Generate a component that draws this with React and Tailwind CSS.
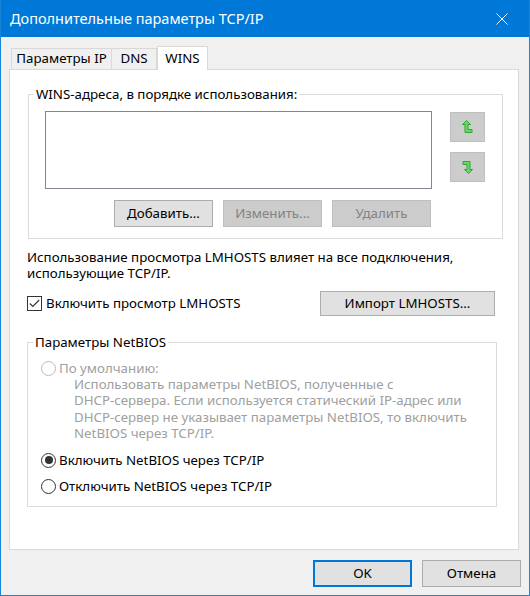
import React from 'react';

function Button({ children, disabled, primary, className = '' }) {
  const tone = disabled
    ? 'bg-[#cccccc] border border-[#bfbfbf] text-[#838383]'
    : primary
    ? 'bg-[#e1e1e1] border-2 border-[#0078d7] text-black'
    : 'bg-[#e1e1e1] border border-[#adadad] text-black';
  return (
    <div className={`flex items-center justify-center ${tone} ${className}`}>
      {children}
    </div>
  );
}

function Arrow({ down }) {
  return (
    <svg width="11" height="14" viewBox="0 0 11 14" className={down ? 'rotate-180' : ''}>
      <polygon
        points="4.5,0.5 8.5,4.5 6,4.5 6,9.5 10,9.5 10,12.5 3,12.5 3,4.5 0.5,4.5"
        fill="#6ad66a"
        stroke="#2fa82f"
        strokeWidth="1"
        strokeLinejoin="miter"
      />
    </svg>
  );
}

function Radio({ checked, disabled }) {
  return (
    <div
      className={`w-[15px] h-[15px] rounded-full border bg-white flex items-center justify-center shrink-0 ${
        disabled ? 'border-[#bcbcbc]' : 'border-[#333333]'
      }`}
    >
      {checked && <div className="w-[8px] h-[8px] rounded-full bg-[#333333]" />}
    </div>
  );
}

function Group({ title, className = '', children }) {
  return (
    <fieldset className={`border border-[#dcdcdc] ${className}`}>
      <legend className="ml-[5px] px-[2px] leading-[16px]">{title}</legend>
      {children}
    </fieldset>
  );
}

export default function App() {
  return (
    <div className="w-[530px] h-[596px] flex flex-col bg-[#f0f0f0] border-x border-b border-[#1883d7] text-[13.3px] text-black font-['Noto_Sans',sans-serif] select-none">
      {/* title bar */}
      <div className="h-[37px] shrink-0 bg-[#0078d7] flex items-center justify-between pl-[9px] pr-[21px] text-white text-[14.5px]">
        <span>Дополнительные параметры TCP/IP</span>
        <svg width="12" height="12" viewBox="0 0 12 12">
          <path d="M0.5 0.5 L11.5 11.5 M11.5 0.5 L0.5 11.5" stroke="#ffffff" strokeWidth="1" />
        </svg>
      </div>

      {/* tabs */}
      <div className="mt-[9px] ml-[10px] h-[23px] flex items-end">
        <div className="w-[100px] h-[21px] flex items-center justify-center border border-r-0 border-b-0 border-[#d9d9d9]">
          Параметры IP
        </div>
        <div className="w-[46px] h-[21px] flex items-center justify-center border border-b-0 border-[#d9d9d9]">
          DNS
        </div>
        <div className="relative z-10 w-[51px] h-[24px] -mb-px flex items-center justify-center bg-white border border-b-0 border-[#d9d9d9]">
          WINS
        </div>
      </div>

      {/* tab page */}
      <div className="ml-[8px] w-[510px] h-[481px] shrink-0 bg-white border border-[#d9d9d9] pt-[16px] pl-[17px]">
        <Group title="WINS-адреса, в порядке использования:" className="ml-[1px] w-[475px] h-[153px]">
          <div className="pl-[16px] pt-[9px]">
            <div className="flex">
              <div className="w-[387px] h-[78px] border border-[#828790] bg-white" />
              <div className="ml-[18px] mt-[1px] flex flex-col gap-[10px]">
                <Button className="w-[35px] h-[30px]" disabled>
                  <Arrow />
                </Button>
                <Button className="w-[35px] h-[30px]" disabled>
                  <Arrow down />
                </Button>
              </div>
            </div>
            <div className="w-[386px] mt-[11px] flex justify-end gap-[10px]">
              <Button className="w-[99px] h-[27px]">Добавить...</Button>
              <Button className="w-[99px] h-[27px]" disabled>Изменить...</Button>
              <Button className="w-[99px] h-[27px]" disabled>Удалить</Button>
            </div>
          </div>
        </Group>

        <p className="mt-[10px] leading-[16px]">
          Использование просмотра LMHOSTS влияет на все подключения,
          <br />
          использующие TCP/IP.
        </p>

        <div className="mt-[10px] w-[468px] h-[25px] flex items-center justify-between">
          <div className="flex items-center gap-[4px]">
            <div className="w-[15px] h-[15px] border border-[#333333] bg-white flex items-center justify-center">
              <svg width="11" height="9" viewBox="0 0 11 9">
                <path d="M0.8 4.5 L3.8 7.5 L10.2 1" fill="none" stroke="#333333" strokeWidth="1.1" />
              </svg>
            </div>
            <span>Включить просмотр LMHOSTS</span>
          </div>
          <Button className="w-[175px] h-[25px]">Импорт LMHOSTS...</Button>
        </div>

        <Group title="Параметры NetBIOS" className="mt-[18px] w-[470px] h-[173px]">
          <div className="pl-[13px] pt-[10px] leading-[16px]">
            <div className="flex items-center gap-[3px] text-[#a0a0a0]">
              <Radio disabled />
              <span>По умолчанию:</span>
            </div>
            <p className="pl-[33px] text-[#a0a0a0] leading-[16.3px] whitespace-nowrap">
              Использовать параметры NetBIOS, полученные с
              <br />
              DHCP-сервера. Если используется статический IP-адрес или
              <br />
              DHCP-сервер не указывает параметры NetBIOS, то включить
              <br />
              NetBIOS через TCP/IP.
            </p>
            <div className="mt-[11px] flex items-center gap-[3px]">
              <Radio checked />
              <span>Включить NetBIOS через TCP/IP</span>
            </div>
            <div className="mt-[10px] flex items-center gap-[3px]">
              <Radio />
              <span>Отключить NetBIOS через TCP/IP</span>
            </div>
          </div>
        </Group>
      </div>

      {/* dialog buttons */}
      <div className="mt-[10px] mr-[8px] flex justify-end gap-[10px]">
        <Button className="w-[99px] h-[27px]" primary>OK</Button>
        <Button className="w-[99px] h-[27px]">Отмена</Button>
      </div>
    </div>
  );
}
